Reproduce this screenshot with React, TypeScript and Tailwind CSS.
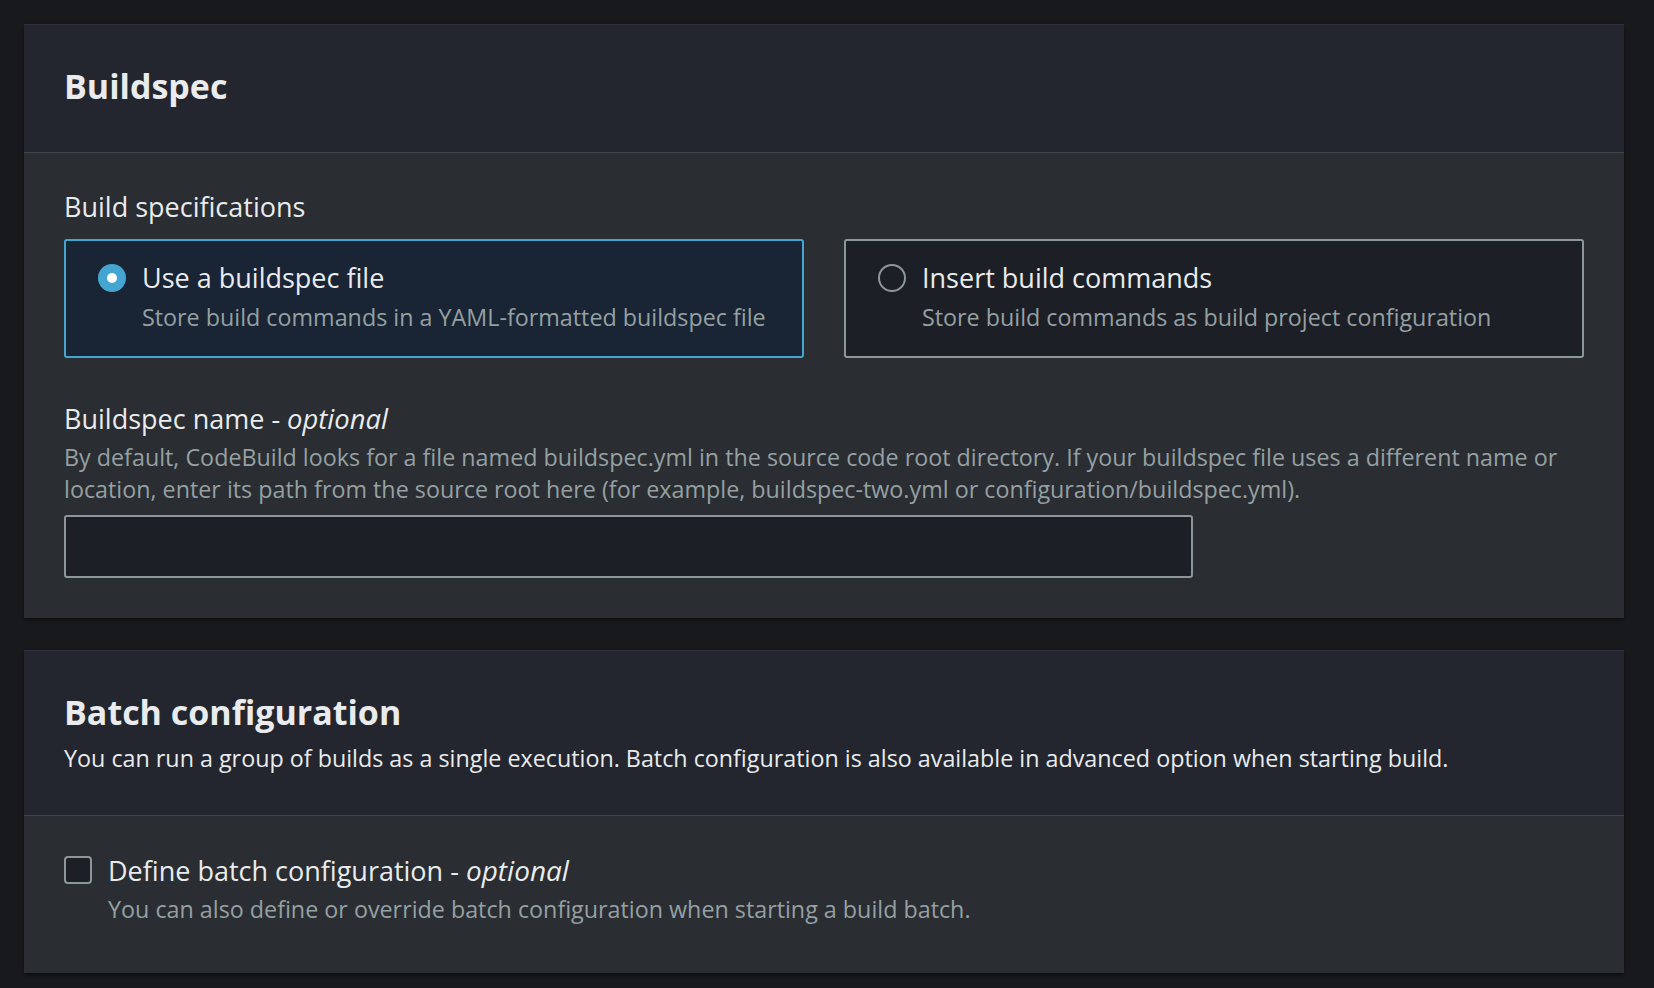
export default function App() {
  return (
    <div
      className="min-h-[988px] bg-[#18191d] pt-6 pb-4 pl-6 pr-[30px] text-[#e9ebed]"
      style={{ fontFamily: '"Open Sans", "Noto Sans", sans-serif' }}
    >
      {/* Buildspec */}
      <section className="border-t border-[#2e3138] bg-[#2a2d32] shadow-[0_2px_3px_rgba(0,0,0,0.45)]">
        <div className="border-b border-[#42474f] bg-[#23262e] px-10 pt-[41px] pb-[46px]">
          <h2 className="text-[34px] leading-[40px] font-bold">Buildspec</h2>
        </div>
        <div className="px-10 pt-9 pb-10">
          <div className="text-[27px] leading-[36px]">Build specifications</div>
          <div className="mt-[14px] grid grid-cols-2 gap-10">
            <label className="flex items-start gap-4 rounded-[3px] border-2 border-[#44a6d0] bg-[#192534] pl-8 pr-4 pt-[19px] pb-[23px]">
              <span className="mt-1 flex h-[28px] w-[28px] shrink-0 items-center justify-center rounded-full bg-[#44a6d0]">
                <span className="h-[10px] w-[10px] rounded-full bg-white" />
              </span>
              <span className="flex flex-col">
                <span className="text-[27px] leading-[36px]">Use a buildspec file</span>
                <span className="mt-[5px] text-[23.3px] leading-[32px] text-[#95a0a2]">
                  Store build commands in a YAML-formatted buildspec file
                </span>
              </span>
            </label>
            <label className="flex items-start gap-4 rounded-[3px] border-2 border-[#8d9699] bg-[#1c1f26] pl-8 pr-4 pt-[19px] pb-[23px]">
              <span className="mt-1 h-[28px] w-[28px] shrink-0 rounded-full border-2 border-[#8d9699]" />
              <span className="flex flex-col">
                <span className="text-[27px] leading-[36px]">Insert build commands</span>
                <span className="mt-[5px] text-[23.3px] leading-[32px] text-[#95a0a2]">
                  Store build commands as build project configuration
                </span>
              </span>
            </label>
          </div>

          <div className="mt-[43px] text-[27px] leading-[36px]">
            Buildspec name - <i className="text-[27.4px]">optional</i>
          </div>
          <p className="mt-[5px] text-[23.3px] leading-[31.5px] text-[#95a0a2]">
            By default, CodeBuild looks for a file named buildspec.yml in the source code root
            directory. If your buildspec file uses a different name or location, enter its path
            from the source root here (for example, buildspec-two.yml or
            configuration/buildspec.yml).
          </p>
          <input
            type="text"
            className="mt-[10px] block h-[63px] w-[1129px] rounded-[3px] border-2 border-[#8d9699] bg-[#1c1f26] px-4 text-[23px] outline-none"
          />
        </div>
      </section>

      {/* Batch configuration */}
      <section className="mt-[32px] border-t border-[#2e3138] bg-[#2a2d32] shadow-[0_2px_3px_rgba(0,0,0,0.45)]">
        <div className="border-b border-[#42474f] bg-[#23262e] px-10 pt-[41px] pb-[41px]">
          <h2 className="text-[34px] leading-[40px] font-bold">Batch configuration</h2>
          <p className="mt-[10px] text-[23.3px] leading-[32px]">
            You can run a group of builds as a single execution. Batch configuration is also
            available in advanced option when starting build.
          </p>
        </div>
        <div className="px-10 pt-9 pb-[48px]">
          <label className="flex items-start gap-4">
            <span className="mt-1 h-[28px] w-[28px] shrink-0 rounded-[4px] border-2 border-[#8d9699] bg-[#1c1f26]" />
            <span className="flex flex-col">
              <span className="text-[27px] leading-[36px]">
                Define batch configuration - <i className="text-[28px]">optional</i>
              </span>
              <span className="mt-1 text-[23.3px] leading-[32px] text-[#95a0a2]">
                You can also define or override batch configuration when starting a build batch.
              </span>
            </span>
          </label>
        </div>
      </section>
    </div>
  );
}
